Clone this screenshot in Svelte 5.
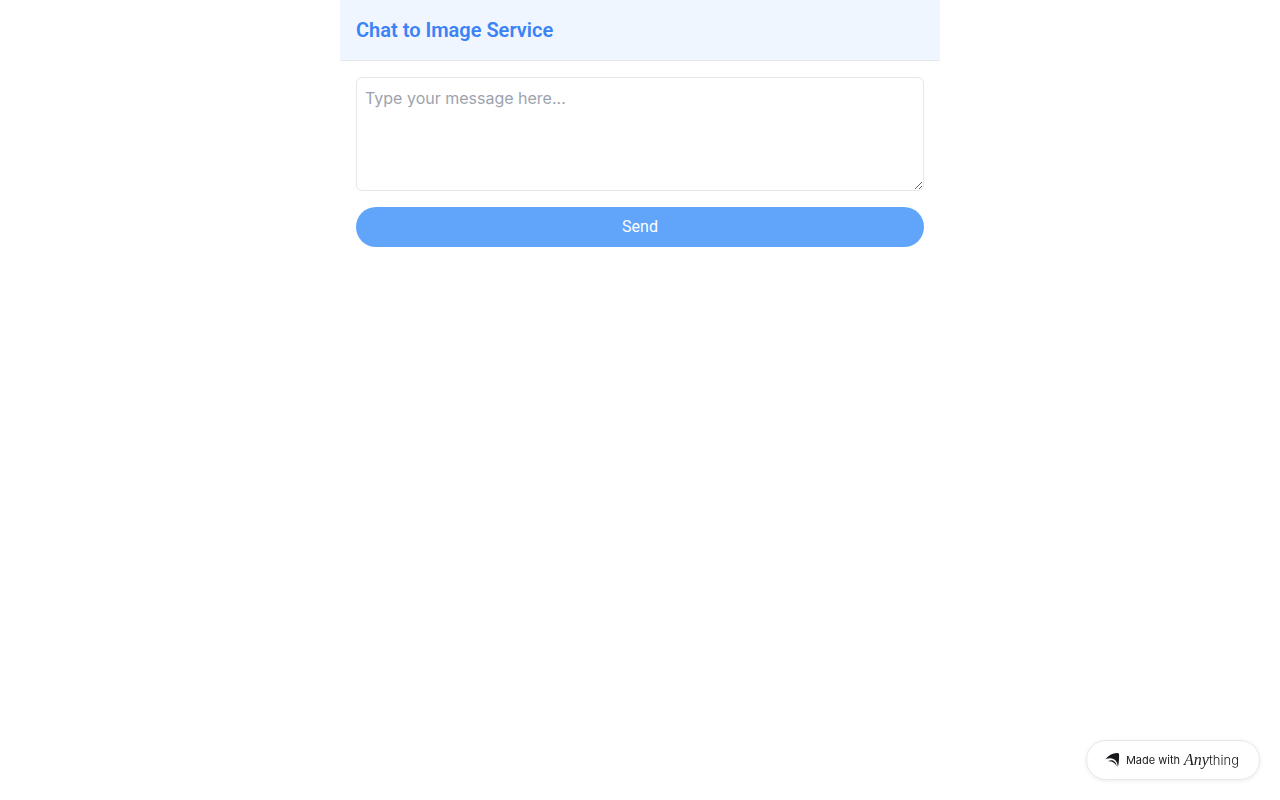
<script>
  let message = '';

  function sendMessage() {
    if (!message.trim()) return;
    message = '';
  }
</script>

<svelte:head>
  <title>Chat to Image Service</title>
</svelte:head>

<main class="chat">
  <header class="chat-header">
    <h1>Chat to Image Service</h1>
  </header>

  <form class="chat-form" on:submit|preventDefault={sendMessage}>
    <textarea
      rows="4"
      name="message"
      aria-label="Message"
      placeholder="Type your message here..."
      bind:value={message}
    ></textarea>
    <button type="submit">Send</button>
  </form>
</main>

<a class="badge" href="/">
  <svg class="badge-logo" viewBox="0 0 16 16" aria-hidden="true">
    <path d="M1.500 7.200C4.200 3.600 8.300 1.300 13 1c1.500 0 2.100.5 2.100 1.900 0 4.300-.2 8.200-1.200 12.200C13.500 8.600 9.600 4.400 1.500 7.200Z" />
    <path d="M4 9.300C8.200 6.600 12.200 9.300 12.800 14.200 10.800 10.800 8 8.900 4 9.300Z" />
  </svg>
  <span class="badge-label">Made with</span>
  <span class="wordmark"><em>Any</em><span>thing</span></span>
</a>

<style>
  :global(body) {
    background: #fff;
  }

  .chat {
    max-width: 600px;
    margin: 0 auto;
    font-family: Inter, sans-serif;
  }

  .chat-header {
    padding: 16px;
    background: #eff6ff;
    border-bottom: 1px solid #e5e7eb;
  }

  h1 {
    margin: 0;
    font-family: Roboto, sans-serif;
    font-size: 20px;
    font-weight: 600;
    line-height: 28px;
    color: #3b82f6;
  }

  .chat-form {
    display: flex;
    flex-direction: column;
    gap: 16px;
    padding: 16px;
  }

  textarea,
  button {
    box-sizing: border-box;
    width: 100%;
    margin: 0;
    padding: 8px;
    font-size: 16px;
    line-height: 24px;
  }

  textarea {
    display: block;
    border: 1px solid #e5e7eb;
    border-radius: 6px;
    font-family: inherit;
    resize: vertical;
  }

  textarea::placeholder {
    color: #9ca3af;
  }

  button {
    border: none;
    border-radius: 20px;
    background: #60a5fa;
    color: #fff;
    font-family: Roboto, sans-serif;
    cursor: pointer;
  }

  .badge {
    position: fixed;
    right: 20px;
    bottom: 20px;
    display: flex;
    align-items: center;
    box-sizing: border-box;
    height: 40px;
    padding: 0 20px 0 17px;
    border: 1px solid #e8e8e8;
    border-radius: 20px;
    background: #fff;
    box-shadow: 0 1px 4px rgba(0, 0, 0, 0.08);
    color: #18191b;
    font-family: Inter, sans-serif;
    text-decoration: none;
  }

  .badge-logo {
    width: 16px;
    height: 16px;
    margin-right: 6px;
    fill: currentColor;
  }

  .badge-label {
    margin-right: 4px;
    font-size: 11px;
    line-height: 16px;
  }

  .wordmark {
    font-size: 13px;
    font-weight: 300;
    line-height: 20px;
  }

  .wordmark em {
    font-family: "Liberation Serif", serif;
    font-size: 16px;
    font-weight: 400;
  }
</style>
